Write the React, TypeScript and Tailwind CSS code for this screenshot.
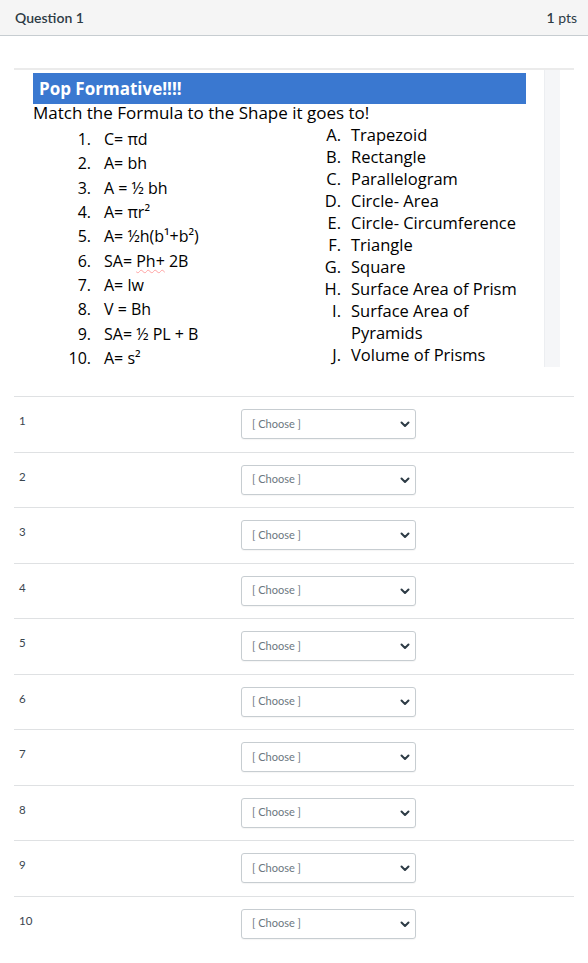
import React from 'react';

const FORMULAS: React.ReactNode[] = [
  <>C= πd</>,
  <>A= bh</>,
  <>A = ½ bh</>,
  <>A= πr²</>,
  <>A= ½h(b¹+b²)</>,
  <>
    SA= <span className="underline decoration-wavy decoration-red-300 decoration-1 underline-offset-2">Ph+</span> 2B
  </>,
  <>A= lw</>,
  <>V = Bh</>,
  <>SA= ½ PL + B</>,
  <>A= s²</>,
];

const SHAPES: [string, string][] = [
  ['A.', 'Trapezoid'],
  ['B.', 'Rectangle'],
  ['C.', 'Parallelogram'],
  ['D.', 'Circle- Area'],
  ['E.', 'Circle- Circumference'],
  ['F.', 'Triangle'],
  ['G.', 'Square'],
  ['H.', 'Surface Area of Prism'],
  ['I.', 'Surface Area of Pyramids'],
  ['J.', 'Volume of Prisms'],
];

const ChoiceBox: React.FC = () => (
  <div className="flex h-[30px] w-[175px] items-center justify-between rounded-[3px] border border-[#c7cdd1] bg-white pl-[10px] pr-[4px] shadow-[0_1px_1px_rgba(0,0,0,0.04)]">
    <span className="text-[11px] text-[#6b7780]">[ Choose ]</span>
    <svg width="12" height="12" viewBox="0 0 24 24" fill="none" stroke="#2d3b45" strokeWidth="4" strokeLinecap="round" strokeLinejoin="round">
      <path d="M5 9l7 7 7-7" />
    </svg>
  </div>
);

export default function App() {
  return (
    <div className="min-h-[963px] w-[588px] bg-white font-['Lato','Liberation_Sans',sans-serif] text-[#2d3b45]">
      {/* Question header */}
      <div className="flex h-[36px] items-center justify-between border-b border-[#c7cdd1] bg-[#f5f5f5] pl-[15px] pr-[11px]">
        <span className="text-[14px] font-semibold">Question 1</span>
        <span className="text-[14px]">
          <span className="font-semibold">1</span> pts
        </span>
      </div>

      <div className="px-[14px]">
        {/* Embedded worksheet image */}
        <div className="mt-[32px] flex h-[299px] border-t-2 border-[#ebebeb]">
          <div className="w-[530px] bg-white pl-[19px] pt-[3px] font-['Open_Sans','Noto_Sans',sans-serif] text-black">
            <div className="flex h-[31px] w-[493px] items-center bg-[#3a78d0] pl-[6px] text-[17px] font-bold text-white">
              Pop Formative!!!!
            </div>
            <div className="text-[17px] leading-[18px]">Match the Formula to the Shape it goes to!</div>
            <div className="flex">
              <div className="w-[277px] pt-[5px]">
                {FORMULAS.map((f, i) => (
                  <div key={i} className="flex h-[24.3px] items-center text-[16px]">
                    <span className="w-[71px] pr-[13px] text-right">{i + 1}.</span>
                    <span>{f}</span>
                  </div>
                ))}
              </div>
              <div className="flex-1 pt-[2px]">
                {SHAPES.map(([k, v]) => (
                  <div key={k} className="flex text-[16.5px] leading-[22px]">
                    <span className="w-[41px] pr-[10px] text-right">{k}</span>
                    <span className="w-[175px]">{v}</span>
                  </div>
                ))}
              </div>
            </div>
          </div>
          <div className="w-[16px] border-l border-[#eceef1] bg-[#f5f6f8]" />
        </div>

        {/* Answer rows */}
        <div className="mt-[29px]">
          {Array.from({ length: 10 }, (_, i) => (
            <div key={i} className="flex h-[55.5px] border-t border-[#dfe1e3] pt-[12px]">
              <div className="w-[227px] pl-[5px] pt-[3px] text-[11.5px] text-[#3a464f]">{i + 1}</div>
              <ChoiceBox />
            </div>
          ))}
        </div>
      </div>
    </div>
  );
}
